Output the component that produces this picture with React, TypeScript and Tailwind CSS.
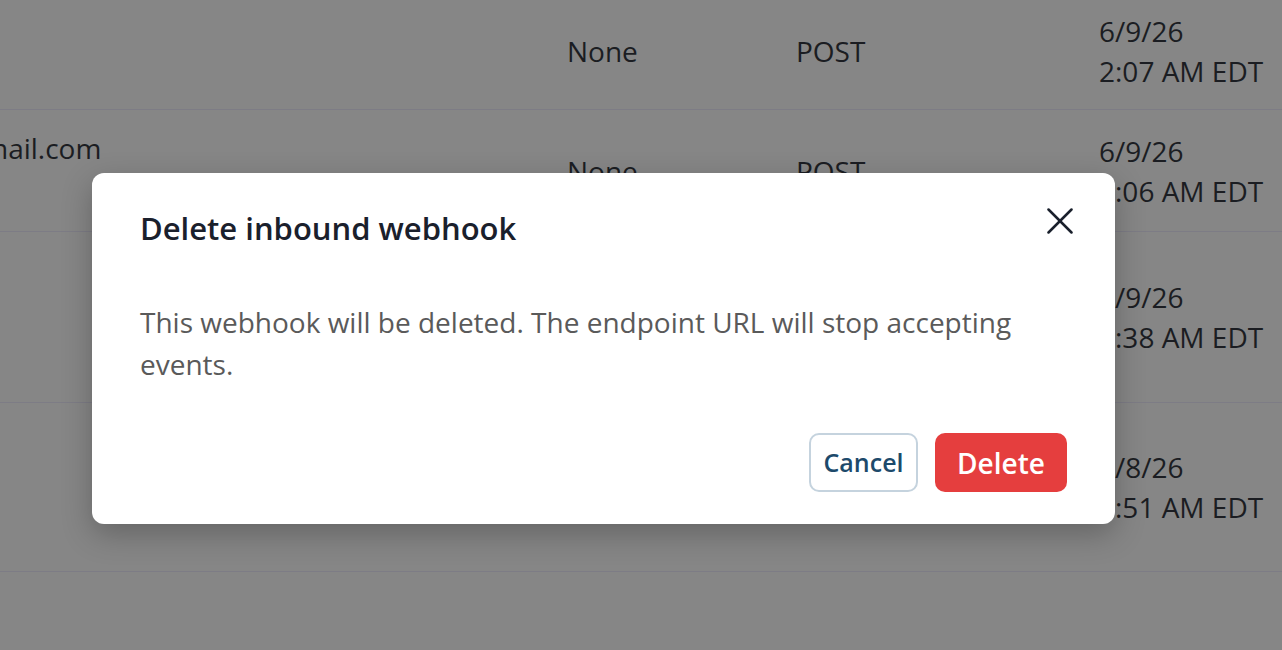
import React from "react";

const rows = [
  { h: "h-[110px] pb-[8px]", c1: "", none: "None", post: "POST", d1: "6/9/26", d2: "2:07 AM EDT" },
  { h: "h-[122px]", c1: "gmail.com", none: "None", post: "POST", d1: "6/9/26", d2: "2:06 AM EDT" },
  { h: "h-[171px]", c1: "", none: "None", post: "POST", d1: "6/9/26", d2: "1:38 AM EDT" },
  { h: "h-[169px]", c1: "", none: "None", post: "POST", d1: "6/8/26", d2: "1:51 AM EDT" },
];

export default function App() {
  return (
    <div
      className="relative w-[1282px] h-[650px] overflow-hidden bg-[#868686] text-[#1b1d22]"
      style={{ fontFamily: '"Open Sans", "Noto Sans", sans-serif' }}
    >
      <div className="flex flex-col">
        {rows.map((r, i) => (
          <div key={i} className={`${r.h} flex items-center border-b border-[#7d7c85] text-[28px] leading-[40px]`}>
            <div className="w-[567px] shrink-0 self-start pt-[18px] overflow-hidden whitespace-nowrap">
              {r.c1 && <span className="inline-block -ml-[33px]">{r.c1}</span>}
            </div>
            <div className="w-[229px] shrink-0">{r.none}</div>
            <div className="w-[303px] shrink-0">{r.post}</div>
            <div className="flex flex-col whitespace-nowrap">
              <span>{r.d1}</span>
              <span>{r.d2}</span>
            </div>
          </div>
        ))}
      </div>

      <div className="absolute left-[92px] top-[173px] w-[1023px] h-[351px] bg-white rounded-[12px] shadow-[0_10px_30px_rgba(0,0,0,0.25)] px-12 pt-8 pb-8 flex flex-col">
        <div className="flex items-start justify-between">
          <h2 className="text-[31px] leading-[46px] font-semibold text-[#1a202c]">Delete inbound webhook</h2>
          <button className="-mt-[2px] -mr-[11px] w-[36px] h-[36px] flex items-center justify-center text-[#1a202c]">
            <svg width="26" height="26" viewBox="0 0 26 26" fill="none" stroke="currentColor" strokeWidth="2.5" strokeLinecap="round">
              <line x1="1.5" y1="1.5" x2="24.5" y2="24.5" />
              <line x1="24.5" y1="1.5" x2="1.5" y2="24.5" />
            </svg>
          </button>
        </div>
        <p className="mt-[50px] text-[28px] leading-[42px] text-[#5a5a5a] pr-[40px]">
          This webhook will be deleted. The endpoint URL will stop accepting events.
        </p>
        <div className="mt-auto flex justify-end gap-[17px]">
          <button className="h-[59px] w-[109px] rounded-[10px] border-2 border-[#c5d3de] text-[25px] font-semibold text-[#1d4a6b] flex items-center justify-center">
            Cancel
          </button>
          <button className="h-[59px] w-[132px] rounded-[10px] bg-[#e53e3e] text-[28px] font-semibold text-white flex items-center justify-center">
            Delete
          </button>
        </div>
      </div>
    </div>
  );
}
